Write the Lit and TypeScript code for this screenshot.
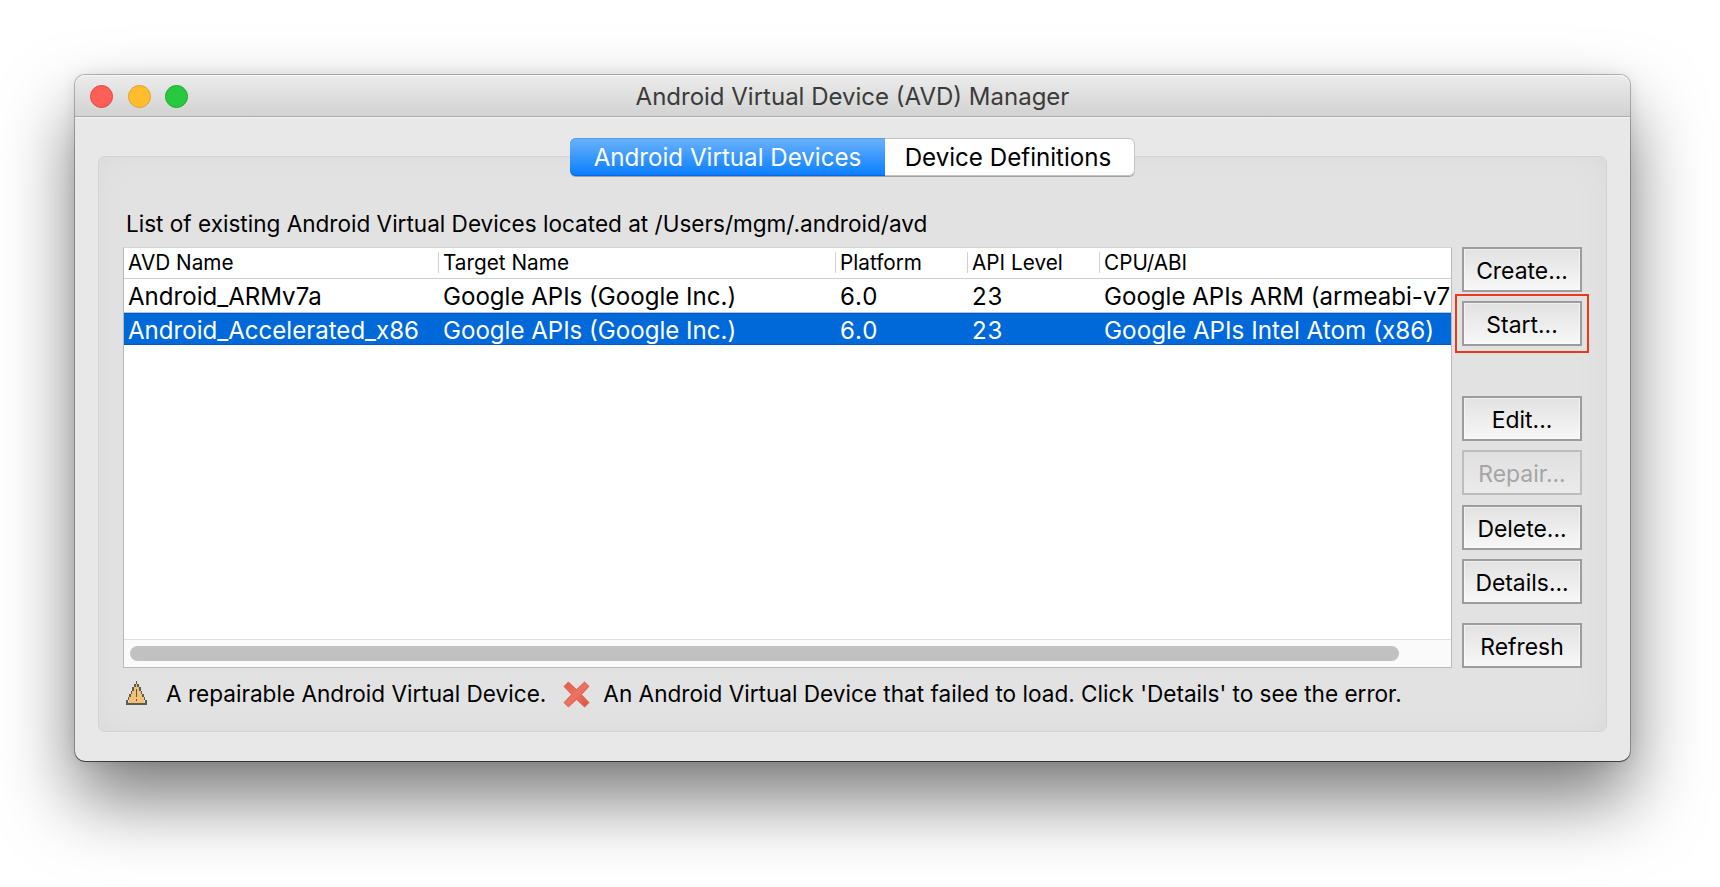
import { LitElement, html, css, svg } from "lit";
import { customElement } from "lit/decorators.js";
import { classMap } from "lit/directives/class-map.js";

type Avd = { cells: string[]; selected: boolean };
type Action = { label: string; disabled?: boolean; marked?: boolean; spaced?: string };

const COLUMNS = ["AVD Name", "Target Name", "Platform", "API Level", "CPU/ABI"];

const AVDS: Avd[] = [
  { cells: ["Android_ARMv7a", "Google APIs (Google Inc.)", "6.0", "23", "Google APIs ARM (armeabi-v7"], selected: false },
  { cells: ["Android_Accelerated_x86", "Google APIs (Google Inc.)", "6.0", "23", "Google APIs Intel Atom (x86)"], selected: true },
];

const ACTIONS: Action[] = [
  { label: "Create..." },
  { label: "Start...", marked: true },
  { label: "Edit...", spaced: "wide" },
  { label: "Repair...", disabled: true },
  { label: "Delete..." },
  { label: "Details..." },
  { label: "Refresh", spaced: "narrow" },
];

const warningIcon = svg`<svg class="warn" viewBox="0 0 13 15" preserveAspectRatio="none">
  <path fill="#f3c074" d="M6 2h1v2h1v2h1v2h1v2h1v3h1v1H1v-1h1v-3h1V8h1V6h1V4h1z"/>
  <path fill="#5c5a56" d="M6 0h1v2H6zM5 2h1v2H5zM7 2h1v2H7zM4 4h1v2H4zM8 4h1v2H8zM3 6h1v2H3zM9 6h1v2H9zM2 8h1v2H2zM10 8h1v2h-1zM1 10h1v2H1zM11 10h1v2h-1zM0 12h1v3H0zM12 12h1v3h-1zM1 14h11v1H1z"/>
  <path fill="#66583f" d="M6 5h1v5H6zM6 11.5h1v1.2H6z"/>
</svg>`;

const crossIcon = svg`<svg class="cross" viewBox="0 0 27 27">
  <defs><linearGradient id="g" x1="0" y1="0" x2="1" y2="1">
    <stop offset="0" stop-color="#e0594a"/><stop offset=".5" stop-color="#ec7362"/><stop offset="1" stop-color="#d85040"/>
  </linearGradient></defs>
  <path fill="url(#g)" stroke="#dc6553" stroke-width="1" stroke-linejoin="round"
    d="M5.4 1L13.5 8.6 21.6 1 26 5.4 18.4 13.5 26 21.6 21.6 26 13.5 18.4 5.4 26 1 21.6 8.6 13.5 1 5.4z"/>
</svg>`;

@customElement("app-root")
export class AppRoot extends LitElement {
  static styles = css`
    :host {
      display: block;
      box-sizing: border-box;
      width: 1720px;
      height: 887px;
      padding: 75px 90px 0 75px;
      overflow: hidden;
      background: #fff;
      color: #000;
      font-family: Inter, "Liberation Sans", sans-serif;
    }
    * { box-sizing: border-box; }
    .window {
      display: flex;
      flex-direction: column;
      height: 686px;
      border-radius: 10px;
      background: #e8e8e8;
      box-shadow: 0 0 0 1px rgba(0, 0, 0, 0.25), 0 1px 0 0 rgba(0, 0, 0, 0.5),
        0 38px 72px rgba(0, 0, 0, 0.52), 0 0 16px rgba(0, 0, 0, 0.1);
    }
    .titlebar {
      display: grid;
      grid-template-columns: 150px 1fr 150px;
      align-items: center;
      height: 42px;
      border-radius: 10px 10px 0 0;
      border-bottom: 1px solid #adadad;
      background: linear-gradient(#ececec, #d2d2d2);
      box-shadow: inset 0 1px 0 #f6f6f6, 0 1px 0 #f2f2f2;
    }
    .lights { display: flex; gap: 14.7px; padding: 1px 0 0 15px; }
    .light { width: 23px; height: 23px; border-radius: 50%; border: 1px solid; }
    .red { background: #ff5f57; border-color: #e2463f; }
    .amber { background: #ffbd2e; border-color: #e0a028; }
    .green { background: #28c940; border-color: #18ab29; }
    .title { text-align: center; font-size: 24px; line-height: 30px; padding-top: 3px; color: #3b3b3b; white-space: nowrap; }
    .content {
      flex: 1;
      display: flex;
      flex-direction: column;
      align-items: center;
      padding: 21px 23px 29px;
    }
    .tabs {
      display: flex;
      z-index: 1;
      width: 565px;
      height: 38px;
      border-radius: 6px;
      background: #fff;
      box-shadow: inset 0 0 0 1px #c4c4c4, 0 1px 0 #a0a0a0;
      font-size: 24.15px;
      line-height: 40px;
      text-align: center;
      white-space: nowrap;
    }
    .tab { width: 250px; padding-right: 4px; }
    .tab.active {
      width: 315px;
      padding-right: 0;
      color: #fff;
      border-radius: 6px 0 0 6px;
      background: linear-gradient(#6cb3fa, #077dff);
      box-shadow: inset 0 1px 0 #4f9df5, inset 0 -1px 0 #0a62f0;
    }
    .group {
      flex: 1;
      align-self: stretch;
      display: flex;
      flex-direction: column;
      margin-top: -20px;
      padding: 50px 24px 0 24px;
      border: 1px solid #d3d3d3;
      border-radius: 7px;
      background: #e2e2e2;
      box-shadow: inset 0 0 26px #dadada;
    }
    .caption { height: 40px; padding-left: 3px; font-size: 22.55px; line-height: 34px; white-space: nowrap; }
    .main { display: flex; gap: 10px; }
    .table {
      display: flex;
      flex-direction: column;
      width: 1330px;
      height: 421px;
      border: 1px solid #b9b9b9;
      border-top-color: #d4d4d4;
      background: #fff;
      overflow: hidden;
    }
    .row, .head {
      display: grid;
      grid-template-columns: 315px 397px 132px 132px 1fr;
      white-space: nowrap;
    }
    .head { height: 31px; border-bottom: 1px solid #cfcfcf; font-size: 20.75px; line-height: 29px; }
    .head span { padding-left: 4px; }
    .head span + span { margin: 4px 0 6px -1px; line-height: 21px; border-left: 1px solid #d2d2d2; }
    .row { height: 34px; font-size: 24.07px; line-height: 36px; }
    .row span { padding-left: 4px; }
    .row span:nth-child(3), .row span:nth-child(4) { letter-spacing: 0.9px; }
    .row.selected span:last-child { font-size: 24.25px; }
    .row.selected { height: 32px; line-height: 35px; color: #fff; background: #0069d9; box-shadow: inset 0 1px 0 #0b58bd, inset 0 -1px 0 #0b58bd, 0 -1px 0 #a9c8ee; }
    .track { margin-top: auto; height: 28px; border-top: 1px solid #dfdfdf; background: #fafafa; padding: 6px 0 0 6px; }
    .thumb { width: 1269px; height: 15px; border-radius: 8px; background: #c1c1c1; }
    .actions { display: flex; flex-direction: column; gap: 9.6px; width: 120px; }
    .btn {
      height: 45px;
      padding: 2px 0 0;
      border: 2px solid #9c9c9c;
      background: linear-gradient(#e2e2e2, #f7f7f7);
      box-shadow: inset 0 0 0 1px rgba(255, 255, 255, 0.5);
      font: 22.9px/40px Inter, "Liberation Sans", sans-serif;
      text-align: center;
      color: #000;
    }
    .btn.disabled { border-color: #bdbdbd; color: #a5a5a5; background: linear-gradient(#e0e0e0, #ebebeb); box-shadow: none; }
    .btn.marked { margin-top: -0.2px; outline: 2px solid #ea3a1c; outline-offset: 5.5px; }
    .btn.wide { margin-top: 39.6px; }
    .btn.narrow { margin-top: 9.2px; }
    .legend { display: flex; align-items: center; height: 52px; font-size: 22.59px; line-height: 30px; white-space: nowrap; }
    .warn { width: 21px; height: 24px; margin: -3px 19px 0 3px; shape-rendering: crispEdges; }
    .cross { width: 27px; height: 27px; margin: 0 13px 0 17px; }
  `;

  render() {
    return html`
      <div class="window">
        <div class="titlebar">
          <div class="lights"><i class="light red"></i><i class="light amber"></i><i class="light green"></i></div>
          <div class="title">Android Virtual Device (AVD) Manager</div>
        </div>
        <div class="content">
          <div class="tabs">
            <div class="tab active">Android Virtual Devices</div>
            <div class="tab">Device Definitions</div>
          </div>
          <div class="group">
            <div class="caption">List of existing Android Virtual Devices located at /Users/mgm/.android/avd</div>
            <div class="main">
              <div class="table">
                <div class="head">${COLUMNS.map((c) => html`<span>${c}</span>`)}</div>
                ${AVDS.map(
                  (a) => html`<div class=${classMap({ row: true, selected: a.selected })}>
                    ${a.cells.map((c) => html`<span>${c}</span>`)}
                  </div>`
                )}
                <div class="track"><div class="thumb"></div></div>
              </div>
              <div class="actions">
                ${ACTIONS.map(
                  (b) => html`<button
                    class=${classMap({ btn: true, disabled: !!b.disabled, marked: !!b.marked, [b.spaced ?? "plain"]: true })}
                    ?disabled=${b.disabled}
                  >${b.label}</button>`
                )}
              </div>
            </div>
            <div class="legend">
              ${warningIcon}<span>A repairable Android Virtual Device.</span>
              ${crossIcon}<span>An Android Virtual Device that failed to load. Click 'Details' to see the error.</span>
            </div>
          </div>
        </div>
      </div>
    `;
  }
}
